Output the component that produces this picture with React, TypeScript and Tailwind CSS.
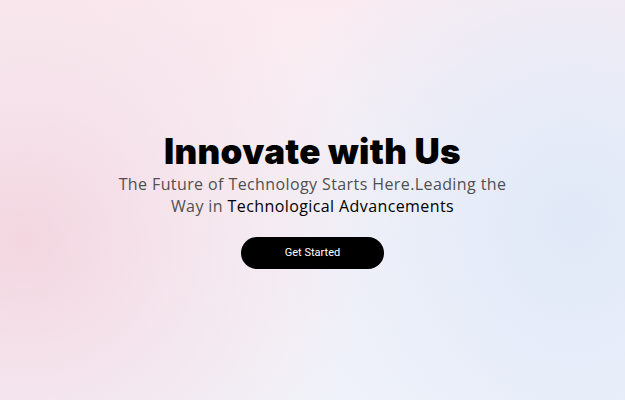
export default function App() {
  return (
    <section className="relative h-[400px] w-full overflow-hidden bg-[#f6f4f8]">
      <div className="absolute inset-0 bg-[radial-gradient(ellipse_55%_85%_at_4%_60%,#f3d6e0_0%,rgba(245,222,231,0.75)_40%,rgba(246,244,248,0)_100%),radial-gradient(ellipse_50%_85%_at_92%_55%,#e0e9f8_0%,rgba(227,235,249,0.7)_45%,rgba(246,244,248,0)_100%),linear-gradient(180deg,#fbebf0_0%,#f6f2f7_50%,#f1f3fa_100%)]" />

      <div className="relative flex h-full flex-col items-center justify-center px-6 text-center">
        <h1 className="font-['Inter',sans-serif] text-[35px] font-black leading-[40px] tracking-[0.3px] text-black">
          Innovate with Us
        </h1>

        <p className="mt-[2px] max-w-[400px] font-['Open_Sans',sans-serif] text-[16px] font-normal leading-[22px] tracking-[0.4px] text-[#505050]">
          The Future of Technology Starts Here.Leading the Way in{" "}
          <span className="font-medium text-black">
            Technological Advancements
          </span>
        </p>

        <button className="mt-[20px] flex h-[32px] w-[143px] items-center justify-center rounded-full bg-black font-['Roboto',sans-serif] text-[11px] text-white">
          Get Started
        </button>
      </div>
    </section>
  );
}
